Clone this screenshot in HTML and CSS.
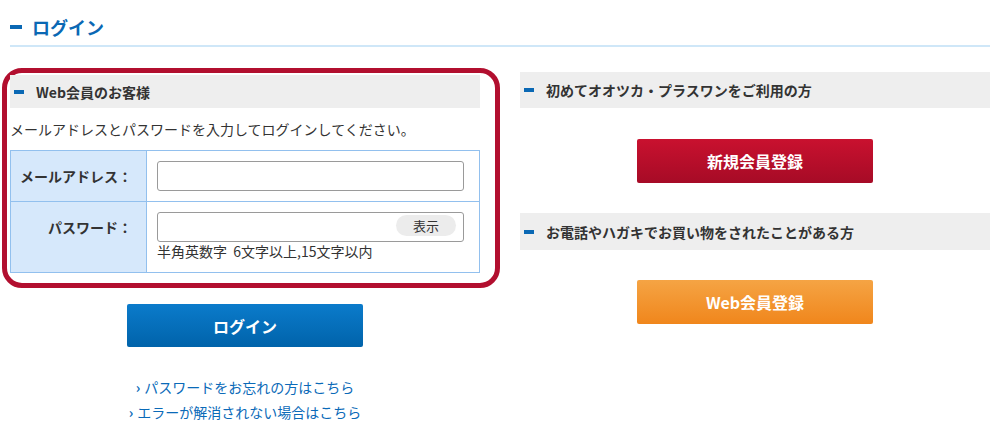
FILE: index.html
```html
<!DOCTYPE html>
<html lang="ja">
<head>
<meta charset="utf-8">
<title>ログイン</title>
<link rel="stylesheet" href="styles.css">
</head>
<body>
<div class="page">
  <h1 class="page-title"><span class="title-dash"></span>ログイン</h1>
  <div class="main">
    <div class="left">
      <div class="frame">
        <h2 class="bar"><span class="bar-dash"></span>Web会員のお客様</h2>
        <p class="lead">メールアドレスとパスワードを入力してログインしてください。</p>
        <table class="form">
          <tr>
            <th>メールアドレス：</th>
            <td><div class="field"><input type="text" class="inp"></div></td>
          </tr>
          <tr>
            <th>パスワード：</th>
            <td>
              <div class="field"><input type="password" class="inp"><span class="show">表示</span></div>
              <p class="note">半角英数字&nbsp;&nbsp;6文字以上,15文字以内</p>
            </td>
          </tr>
        </table>
      </div>
      <div class="btn-row"><a class="btn btn-blue">ログイン</a></div>
      <ul class="links">
        <li><a><span class="chev">›</span>パスワードをお忘れの方はこちら</a></li>
        <li><a><span class="chev">›</span>エラーが解消されない場合はこちら</a></li>
      </ul>
    </div>
    <div class="right">
      <h2 class="bar bar-r"><span class="bar-dash"></span>初めてオオツカ・プラスワンをご利用の方</h2>
      <div class="btn-row r1"><a class="btn btn-red">新規会員登録</a></div>
      <h2 class="bar bar-r bar-r2"><span class="bar-dash"></span>お電話やハガキでお買い物をされたことがある方</h2>
      <div class="btn-row r1"><a class="btn btn-orange">Web会員登録</a></div>
    </div>
  </div>
</div>
</body>
</html>
```

FILE: styles.css
```css
* { box-sizing: border-box; }
html, body { margin: 0; padding: 0; background: #fff; }
body {
  font-family: "Noto Sans CJK JP", "Noto Sans", sans-serif;
  color: #333;
  font-size: 14px;
}
.page { padding: 0 10px; width: 1000px; }
.page-title {
  margin: 0;
  padding: 14px 0 5px;
  font-size: 18px;
  line-height: 26px;
  font-weight: bold;
  color: #0a68b4;
  border-bottom: 2px solid #cfe7f8;
  display: flex;
  align-items: center;
}
.title-dash {
  display: inline-block;
  width: 12px;
  height: 4px;
  background: #0a68b4;
  margin-right: 10px;
}
.main {
  display: flex;
  margin: 21px 0 0 -8px;
  align-items: flex-start;
}
.left { width: 498px; }
.right { width: 470px; margin-left: 20px; }
.frame {
  border: 5px solid #b20f2f;
  border-radius: 20px;
  padding: 2px 15px 10px 3px;
}
.bar {
  margin: 0;
  background: #eeeeee;
  height: 33px;
  display: flex;
  align-items: center;
  padding-left: 4px;
  font-size: 14px;
  font-weight: bold;
  color: #333;
}
.bar-dash {
  display: inline-block;
  width: 10px;
  height: 4px;
  background: #0a68b4;
  margin-right: 12px;
}
.lead {
  margin: 11px 0 11px;
  line-height: 20px;
  font-size: 14px;
  color: #333;
}
.form {
  width: 470px;
  border-collapse: collapse;
}
.form th, .form td {
  border: 1px solid #92c0ee;
  vertical-align: top;
}
.form th {
  width: 136px;
  background: #d6e8fb;
  text-align: right;
  padding: 10px 14px 0 0;
  line-height: 31px;
  font-size: 14px;
  font-weight: bold;
  color: #333;
  white-space: nowrap;
}
.form td { padding: 10px 15px 10px 10px; }
.form tr:last-child td { padding-bottom: 11px; }
.field { position: relative; height: 30px; }
.inp {
  display: block;
  width: 100%;
  height: 30px;
  border: 1px solid #9a9a9a;
  border-radius: 3px;
  margin: 0;
  padding: 0 8px;
  background: #fff;
}
.show {
  position: absolute;
  right: 8px;
  top: 3px;
  width: 60px;
  height: 21px;
  border-radius: 11px;
  background: #ececec;
  font-size: 13px;
  line-height: 21px;
  text-align: center;
  color: #333;
}
.note {
  margin: 0;
  font-size: 14px;
  line-height: 19px;
  color: #333;
}
.btn-row { display: flex; justify-content: center; margin-top: 16px; }
.left .btn-row { width: 470px; margin-left: 8px; }
.btn {
  display: flex;
  align-items: center;
  justify-content: center;
  width: 236px;
  height: 44px;
  border-radius: 2px;
  color: #fff;
  font-size: 16px;
  font-weight: bold;
  text-decoration: none;
}
.btn-blue { background: linear-gradient(#0b7bcb, #0063aa); height: 43px; }
.btn-red { background: linear-gradient(#c9112f, #a60b26); }
.btn-orange { background: linear-gradient(#f5a444, #f0861c); }
.links {
  list-style: none;
  margin: 28px 0 0 8px;
  padding: 0;
  width: 470px;
  text-align: center;
}
.links li { line-height: 25px; height: 25px; font-size: 14px; }
.links a { color: #0a6ab8; text-decoration: none; }
.chev { font-weight: bold; font-size: 14px; margin-right: 4px; }
.bar-r { margin-top: 4px; height: 36px; }
.r1 { margin-top: 31px; }
.bar-r2 { margin-top: 30px; height: 37px; }
.right .btn-row:last-child { margin-top: 30px; }
```
